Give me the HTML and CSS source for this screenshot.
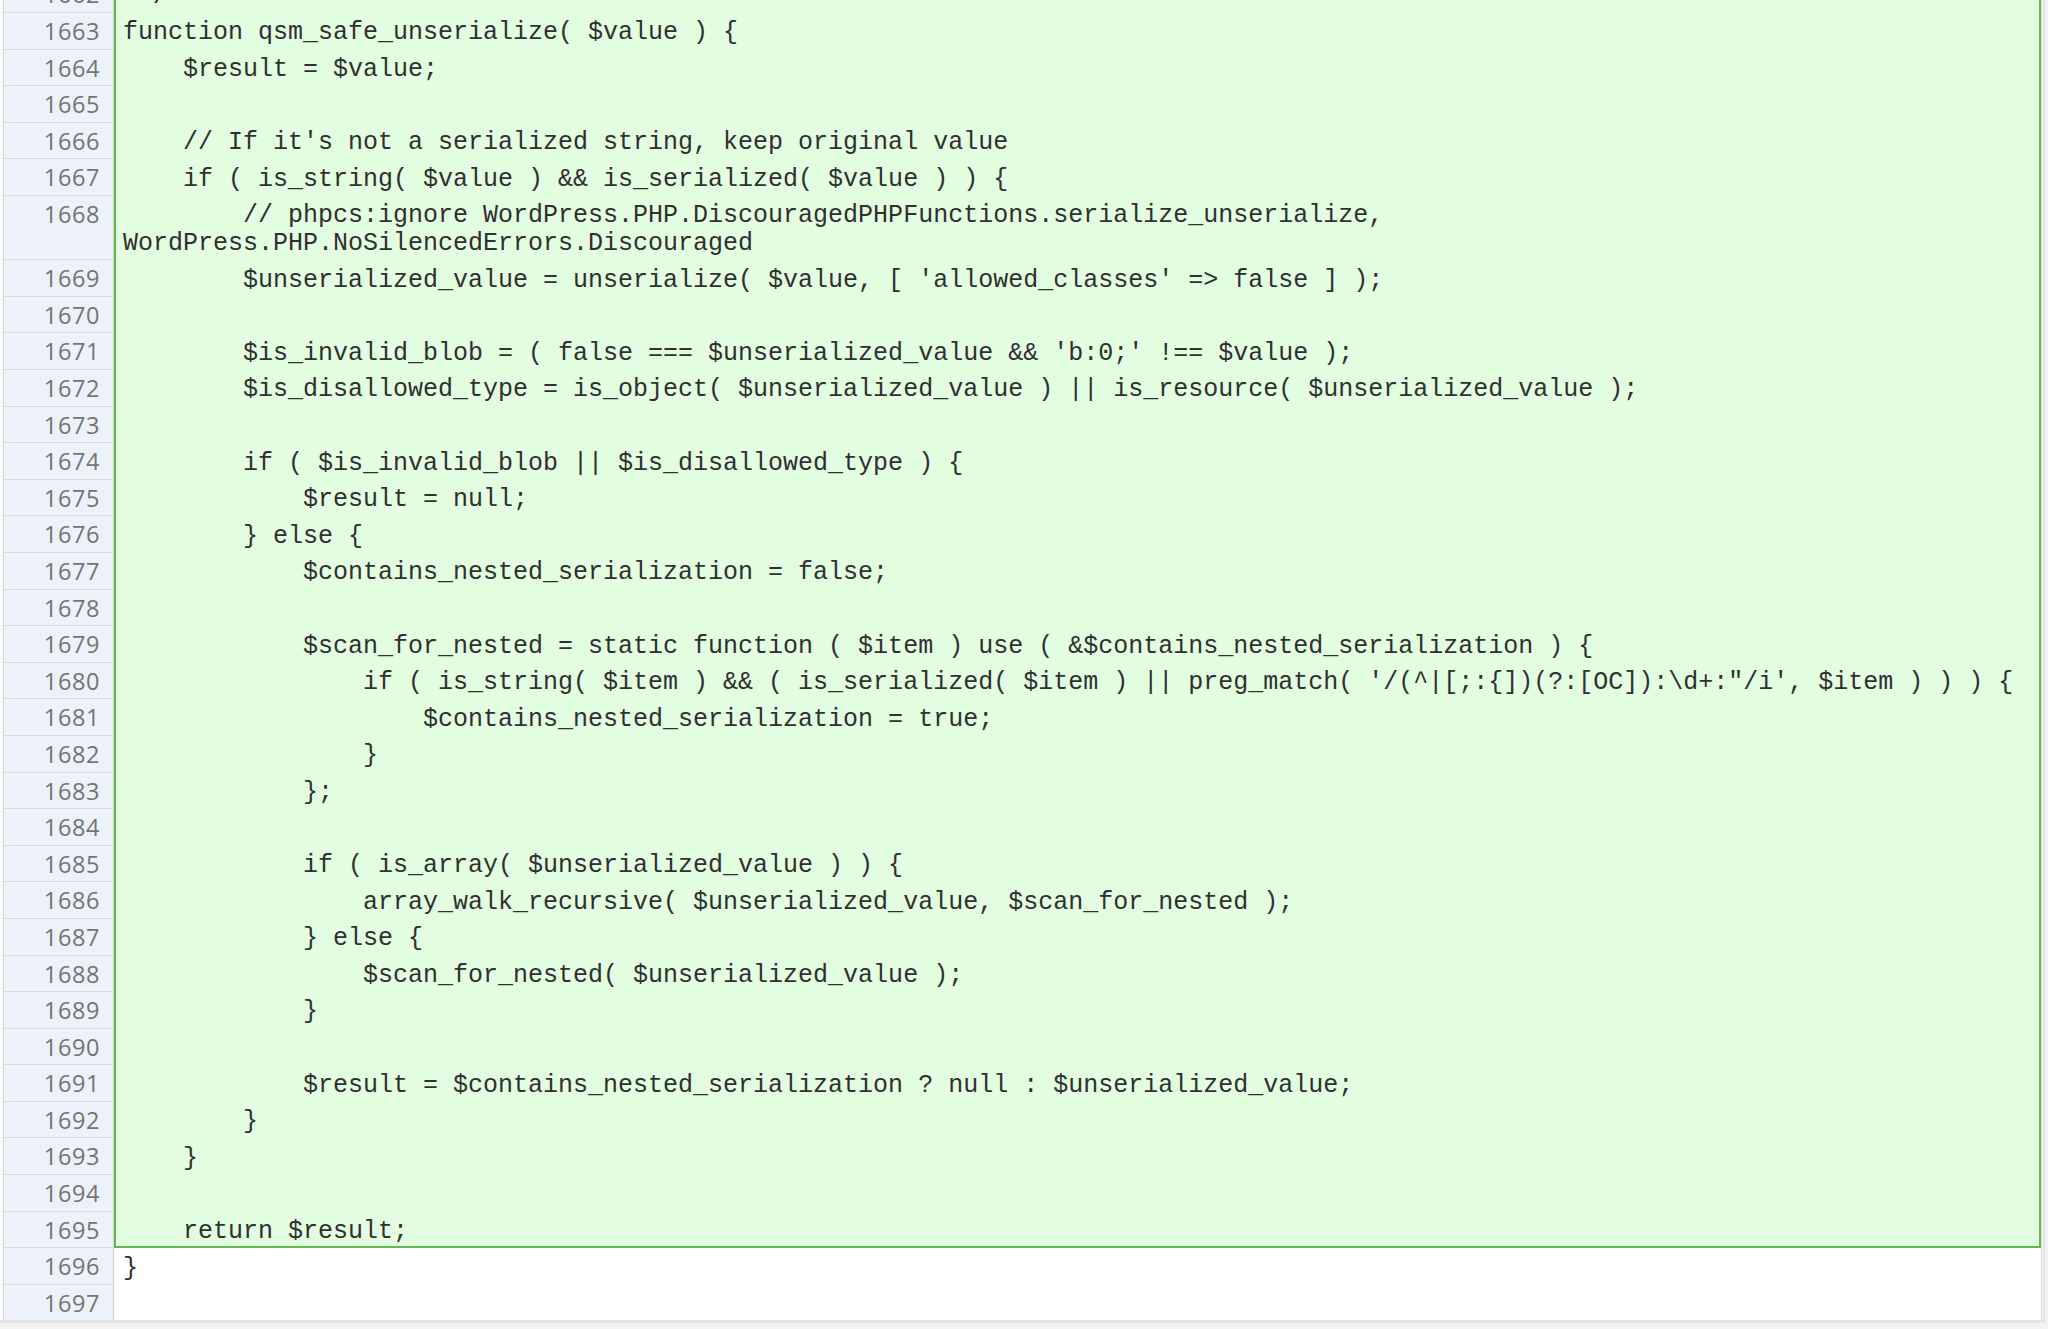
FILE: index.html
```html
<!DOCTYPE html>
<html>
<head>
<meta charset="utf-8">
<title>Diff view</title>
<link rel="stylesheet" href="styles.css">
</head>
<body>
<div class="frame">
  <div class="viewer">
    <div class="gutter">
      <div class="ln">1662</div>
      <div class="ln">1663</div>
      <div class="ln">1664</div>
      <div class="ln">1665</div>
      <div class="ln">1666</div>
      <div class="ln">1667</div>
      <div class="ln tall">1668</div>
      <div class="ln">1669</div>
      <div class="ln">1670</div>
      <div class="ln">1671</div>
      <div class="ln">1672</div>
      <div class="ln">1673</div>
      <div class="ln">1674</div>
      <div class="ln">1675</div>
      <div class="ln">1676</div>
      <div class="ln">1677</div>
      <div class="ln">1678</div>
      <div class="ln">1679</div>
      <div class="ln">1680</div>
      <div class="ln">1681</div>
      <div class="ln">1682</div>
      <div class="ln">1683</div>
      <div class="ln">1684</div>
      <div class="ln">1685</div>
      <div class="ln">1686</div>
      <div class="ln">1687</div>
      <div class="ln">1688</div>
      <div class="ln">1689</div>
      <div class="ln">1690</div>
      <div class="ln">1691</div>
      <div class="ln">1692</div>
      <div class="ln">1693</div>
      <div class="ln">1694</div>
      <div class="ln">1695</div>
      <div class="ln">1696</div>
      <div class="ln">1697</div>
    </div>
    <div class="code">
      <div class="added">
<div class="cl"> */</div>
<div class="cl">function qsm_safe_unserialize( $value ) {</div>
<div class="cl">    $result = $value;</div>
<div class="cl"> </div>
<div class="cl">    // If it's not a serialized string, keep original value</div>
<div class="cl">    if ( is_string( $value ) &amp;&amp; is_serialized( $value ) ) {</div>
<div class="cl">        // phpcs:ignore WordPress.PHP.DiscouragedPHPFunctions.serialize_unserialize,
WordPress.PHP.NoSilencedErrors.Discouraged</div>
<div class="cl">        $unserialized_value = unserialize( $value, [ 'allowed_classes' =&gt; false ] );</div>
<div class="cl"> </div>
<div class="cl">        $is_invalid_blob = ( false === $unserialized_value &amp;&amp; 'b:0;' !== $value );</div>
<div class="cl">        $is_disallowed_type = is_object( $unserialized_value ) || is_resource( $unserialized_value );</div>
<div class="cl"> </div>
<div class="cl">        if ( $is_invalid_blob || $is_disallowed_type ) {</div>
<div class="cl">            $result = null;</div>
<div class="cl">        } else {</div>
<div class="cl">            $contains_nested_serialization = false;</div>
<div class="cl"> </div>
<div class="cl">            $scan_for_nested = static function ( $item ) use ( &amp;$contains_nested_serialization ) {</div>
<div class="cl">                if ( is_string( $item ) &amp;&amp; ( is_serialized( $item ) || preg_match( '/(^|[;:{])(?:[OC]):\d+:"/i', $item ) ) ) {</div>
<div class="cl">                    $contains_nested_serialization = true;</div>
<div class="cl">                }</div>
<div class="cl">            };</div>
<div class="cl"> </div>
<div class="cl">            if ( is_array( $unserialized_value ) ) {</div>
<div class="cl">                array_walk_recursive( $unserialized_value, $scan_for_nested );</div>
<div class="cl">            } else {</div>
<div class="cl">                $scan_for_nested( $unserialized_value );</div>
<div class="cl">            }</div>
<div class="cl"> </div>
<div class="cl">            $result = $contains_nested_serialization ? null : $unserialized_value;</div>
<div class="cl">        }</div>
<div class="cl">    }</div>
<div class="cl"> </div>
<div class="cl">    return $result;</div>
      </div>
<div class="cl">}</div>
<div class="cl"> </div>
    </div>
  </div>
</div>
</body>
</html>
```

FILE: styles.css
```css
html, body {
  margin: 0;
  padding: 0;
}

body {
  width: 2048px;
  height: 1329px;
  overflow: hidden;
  background: #f3f3f3;
}

.frame {
  width: 2045px;
  height: 1323px;
  box-sizing: border-box;
  border-right: 2px solid #e2e2e2;
  border-bottom: 3px solid #e4e4e4;
  background: #fafafa;
  overflow: hidden;
}

.viewer {
  display: flex;
  width: 2037px;
  margin: -23.6px 0 0 3px;
  border-left: 1px solid #d4d4d4;
  border-right: 1px solid #d8d8d8;
  border-bottom: 1px solid #d8d8d8;
  background: #ffffff;
}

.gutter {
  width: 110px;
  flex: none;
  background: #edf2fa;
  border-right: 1px solid #d2d2d2;
  box-sizing: border-box;
}

.ln {
  height: 36.6px;
  box-sizing: border-box;
  border-bottom: 1px solid #d9dbdf;
  padding: 5px 13px 0 0;
  text-align: right;
  font-family: "Open Sans", "Noto Sans", sans-serif;
  font-size: 23.5px;
  letter-spacing: 0.6px;
  line-height: 27.5px;
  color: #747474;
}

.ln.tall {
  height: 64.25px;
}

.code {
  flex: 1;
  min-width: 0;
}

.added {
  background: #e2fde0;
  box-shadow: inset 2px 0 0 #62b94d, inset -2px 0 0 #62b94d, inset 0 -2px 0 #62b94d;
}

.cl {
  white-space: pre;
  padding: 6.25px 0 2.6px 9px;
  font-family: "Liberation Mono", "Courier New", monospace;
  font-size: 25px;
  line-height: 27.75px;
  color: #303030;
}
```
